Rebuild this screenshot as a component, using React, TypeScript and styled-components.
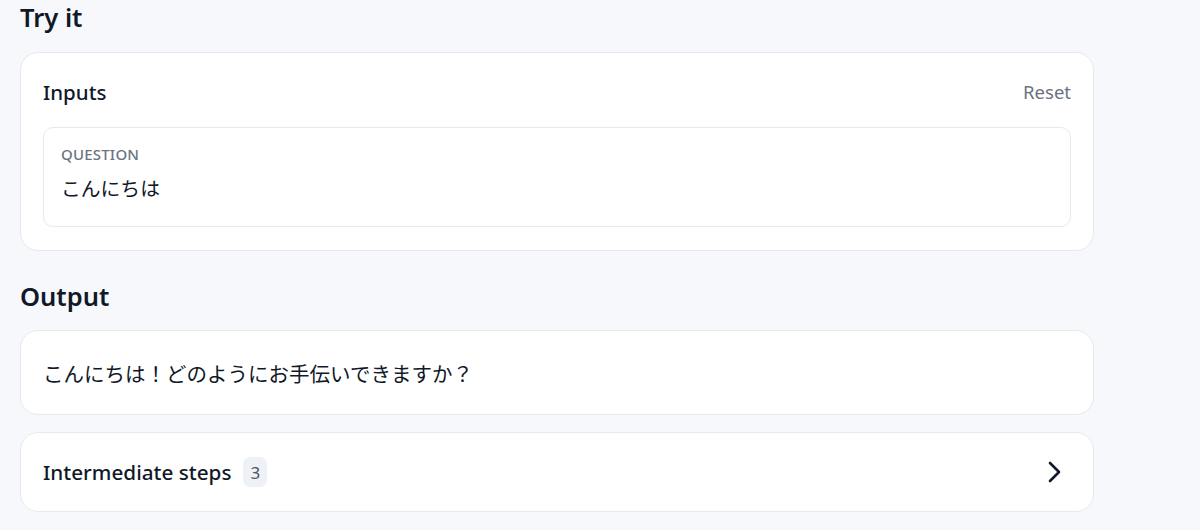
import React from "react";
import styled, { createGlobalStyle } from "styled-components";

const Global = createGlobalStyle`
  html, body { margin: 0; padding: 0; background: #f6f8fb; }
  body {
    font-family: "Noto Sans", "Noto Sans CJK JP", sans-serif;
    color: #111827;
  }
`;

const Page = styled.div`
  width: 1074px;
  padding: 0 0 0 20px;
  display: flex;
  flex-direction: column;
`;

const SectionTitle = styled.h2<{ $top: number }>`
  margin: ${(p) => p.$top}px 0 0 0;
  font-size: 25.5px;
  font-weight: 600;
  line-height: 34px;
  color: #111827;
`;

const Card = styled.div<{ $mt: number }>`
  margin-top: ${(p) => p.$mt}px;
  background: #ffffff;
  border: 1px solid #e6e9ee;
  border-radius: 18px;
  box-sizing: border-box;
`;

const InputsCard = styled(Card)`
  padding: 22px 22px 23px 22px;
  display: flex;
  flex-direction: column;
  gap: 19px;
`;

const CardHeader = styled.div`
  display: flex;
  align-items: center;
  justify-content: space-between;
  height: 33px;
`;

const CardTitle = styled.span`
  font-size: 20.5px;
  font-weight: 500;
  color: #111827;
`;

const ResetButton = styled.button`
  border: none;
  background: none;
  padding: 0;
  font-family: inherit;
  font-size: 18.5px;
  color: #6b7280;
  cursor: pointer;
`;

const Field = styled.div`
  border: 1px solid #e6e9ee;
  border-radius: 10px;
  padding: 16px 17px 21px 17px;
  display: flex;
  flex-direction: column;
  gap: 7px;
`;

const FieldLabel = styled.div`
  font-size: 15px;
  font-weight: 500;
  letter-spacing: 0.2px;
  color: #6b7280;
  text-transform: uppercase;
  line-height: 20px;
`;

const FieldValue = styled.div`
  font-family: "Noto Sans CJK JP", sans-serif;
  font-size: 19.8px;
  line-height: 34px;
  color: #111827;
`;

const OutputCard = styled(Card)`
  height: 85px;
  padding: 0 22px;
  display: flex;
  align-items: center;
  font-family: "Noto Sans CJK JP", sans-serif;
  font-size: 20.5px;
`;

const StepsCard = styled(Card)`
  height: 80px;
  padding: 0 30px 0 22px;
  display: flex;
  align-items: center;
  justify-content: space-between;
`;

const StepsLabel = styled.div`
  display: flex;
  align-items: center;
  gap: 12px;
  font-size: 20.7px;
  font-weight: 500;
`;

const Badge = styled.span`
  display: inline-flex;
  align-items: center;
  justify-content: center;
  min-width: 22px;
  height: 30px;
  padding: 0 1px;
  border-radius: 7px;
  background: #eef1f6;
  color: #4b5563;
  font-size: 17px;
  font-weight: 400;
`;

const Chevron = () => (
  <svg width="16" height="24" viewBox="0 0 16 24" fill="none">
    <polyline
      points="3,3 12,12 3,21"
      stroke="#111827"
      strokeWidth="2.6"
      strokeLinecap="round"
      strokeLinejoin="round"
    />
  </svg>
);

export default function App() {
  return (
    <>
      <Global />
      <Page>
        <SectionTitle $top={0}>Try it</SectionTitle>
        <InputsCard $mt={18}>
          <CardHeader>
            <CardTitle>Inputs</CardTitle>
            <ResetButton>Reset</ResetButton>
          </CardHeader>
          <Field>
            <FieldLabel>Question</FieldLabel>
            <FieldValue>こんにちは</FieldValue>
          </Field>
        </InputsCard>
        <SectionTitle $top={28}>Output</SectionTitle>
        <OutputCard $mt={17}>こんにちは！どのようにお手伝いできますか？</OutputCard>
        <StepsCard $mt={17}>
          <StepsLabel>
            Intermediate steps
            <Badge>3</Badge>
          </StepsLabel>
          <Chevron />
        </StepsCard>
      </Page>
    </>
  );
}
